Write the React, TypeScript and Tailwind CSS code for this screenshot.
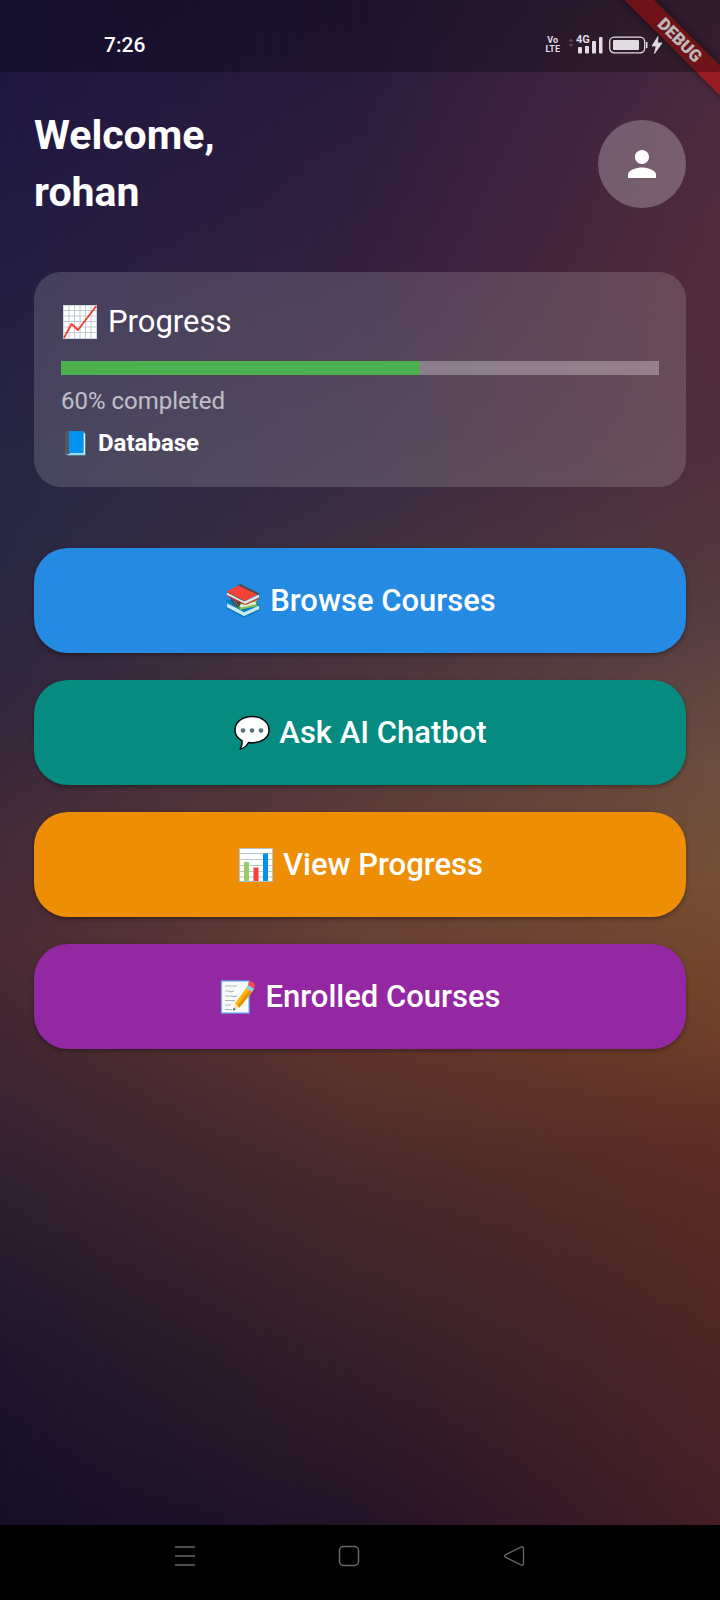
import React from 'react';

type IconProps = { className?: string };

function TrendIcon({ className }: IconProps) {
  return (
    <svg viewBox="0 0 38 38" className={className} aria-hidden="true">
      <rect x="2" y="2" width="34" height="34" fill="#fff" />
      <path
        d="M2.5 7.5h33M2.5 13h33M2.5 18.500h33M2.500 24h33M2.500 29.500h33M8 2.500v33M13.500 2.500v33M19 2.500v33M24.500 2.500v33M30 2.500v33"
        stroke="#b9c4ca"
        strokeWidth="0.9"
        fill="none"
      />
      <rect x="2.400" y="2.400" width="33.200" height="33.200" fill="none" stroke="#c3ccd1" strokeWidth="0.8" />
      <path d="M3 35 L10.500 21 L17 27 L35.300 3" stroke="#f0413a" strokeWidth="1.900" fill="none" strokeLinejoin="round" />
    </svg>
  );
}

function BookIcon({ className }: IconProps) {
  return (
    <svg viewBox="0 0 28 28" className={className} aria-hidden="true">
      <path d="M5 4.500 L8 2 H22 L24.500 4.500 V26.500 H6.500 L4 24.500 Z" fill="#6fa6bd" />
      <path d="M22.500 4.500 H24 V25 H8 V24 H22.500 Z" fill="#e1f0f6" />
      <path d="M4 4 L6.500 2 H9 V24.500 L6 25.500 L4 24 Z" fill="#58595c" />
      <path d="M8 2 H21.500 Q22.500 2 22.500 3 V24.300 H8 Z" fill="#0294ee" />
      <path d="M7 25.500 H24" stroke="#9bd5ec" strokeWidth="1" />
    </svg>
  );
}

function BooksIcon({ className }: IconProps) {
  return (
    <svg viewBox="0 0 38 38" className={className} aria-hidden="true">
      <path d="M2 18.500 L12 18 L35.500 22.500 L20 30.500 Z" fill="#0277bd" />
      <path d="M3 21.500 L20 29.500 L35 23 V27.500 L20 34.500 L3 25.500 Z" fill="#cde6ec" />
      <path d="M2 19 L20 29.500 L35.500 22.500" stroke="#0288d1" strokeWidth="1.500" fill="none" />
      <path d="M2.500 26 L20 35 L35.500 28" stroke="#0b7fc4" strokeWidth="1.700" fill="none" />
      <path d="M8 14 L20 19 L33 17.500 V24 L16 27.500 L10 23 Z" fill="#5f9c35" />
      <path d="M15 22.500 L32 19.500 V22.500 L17 26 Z" fill="#d7e8cf" />
      <path d="M15 22 L33 18 M16 27 L33 23.500" stroke="#8bc34a" strokeWidth="1.300" />
      <path d="M3 9.500 L20 17.500 L14 25.500 L10 23 Z" fill="#424242" />
      <path d="M6 12 L12 23 M9.500 13.500 L14 24" stroke="#78736f" strokeWidth="0.900" />
      <path d="M13 3.500 L16.500 2 L36 12 L33.500 13.500 Z" fill="#4b4647" />
      <path d="M20.500 19.500 L35 12.500 V15.500 L21 22 L3 13.500 V10.500 Z" fill="#dbe7e8" />
      <path d="M21.500 22.500 L35.500 16" stroke="#c93631" strokeWidth="1.200" />
      <path d="M3 13.500 L21 22.500" stroke="#c93631" strokeWidth="1.200" />
      <path d="M2.500 9.500 L14.500 3.500 L33.500 12.500 L21 19 Z" fill="#f44336" />
    </svg>
  );
}

function ChatIcon({ className }: IconProps) {
  return (
    <svg viewBox="0 0 38 38" className={className} aria-hidden="true">
      <path
        d="M19 2.500 C28.500 2.500 36 8 36 16 C36 24 28.500 28.800 19 28.800 C17.800 28.800 16.600 28.700 15.500 28.500 C13.500 32 10.500 34.500 7.500 35 C7 35 7 34.500 7.300 34.200 C8.800 32.600 9.300 29.800 8.900 26.600 C4.700 24.400 2 20.700 2 16 C2 8 9.500 2.500 19 2.500 Z"
        fill="#fff"
        stroke="#050505"
        strokeWidth="1.500"
      />
      <circle cx="10" cy="16.500" r="2.300" fill="#546e7a" />
      <circle cx="19" cy="16.500" r="2.300" fill="#546e7a" />
      <circle cx="28" cy="16.500" r="2.300" fill="#546e7a" />
    </svg>
  );
}

function BarsIcon({ className }: IconProps) {
  return (
    <svg viewBox="0 0 38 38" className={className} aria-hidden="true">
      <rect x="2" y="2" width="34" height="34" fill="#fff" />
      <path d="M2 7.500h34M2 13.500h34M2 19.500h34M2 25.500h34M2 31h34" stroke="#bcc7cc" strokeWidth="1.100" />
      <rect x="2.500" y="2.500" width="33" height="33" fill="none" stroke="#b5bfc4" strokeWidth="1" />
      <rect x="7" y="16" width="5" height="19" fill="#9ccc65" />
      <rect x="16.500" y="21.500" width="5" height="13.500" fill="#f44336" />
      <rect x="26" y="7.500" width="5" height="27.500" fill="#0391ee" />
    </svg>
  );
}

function MemoIcon({ className }: IconProps) {
  return (
    <svg viewBox="0 0 38 38" className={className} aria-hidden="true">
      <rect x="2.500" y="3" width="27.500" height="32" fill="#fafafa" stroke="#64b5f6" strokeWidth="1.200" />
      <path
        d="M6 8h12M6 13h4l2 .8 3-.8M6 18h6l3 .6 3-.6M6 22.500h7l3 .4M6 27h6M6 31.500h5l2 .5"
        stroke="#a7b4ba"
        strokeWidth="1.100"
        fill="none"
      />
      <path d="M14 32.500 L16 25.500 L20.500 29.500 Z" fill="#ffe0b2" />
      <path d="M14 32.500 L14.700 29.800 L16.700 31.500 Z" fill="#424242" />
      <path d="M16 25.500 L27.500 9.500 L33.500 13.500 L20.500 29.500 Z" fill="#fdb515" />
      <path d="M18.500 27.500 L30.500 11.500 L33.500 13.500 L20.500 29.500 Z" fill="#e59600" />
      <path d="M27 10 L29.500 6.500 L35.500 10.500 L33 14 Z" fill="#8ed3ee" />
      <path d="M29 6.800 L30 4.500 Q31.500 2.700 34 4.200 Q37 6.200 36 8.500 L34.800 10.800 Z" fill="#ee4b55" />
    </svg>
  );
}

function PersonIcon({ className }: IconProps) {
  return (
    <svg viewBox="0 0 24 24" className={className} fill="currentColor" aria-hidden="true">
      <path d="M12 12c2.210 0 4-1.790 4-4s-1.790-4-4-4-4 1.790-4 4 1.790 4 4 4zm0 2c-2.670 0-8 1.340-8 4v2h16v-2c0-2.660-5.330-4-8-4z" />
    </svg>
  );
}

const actions = [
  { label: 'Browse Courses', Icon: BooksIcon, color: 'bg-[#258be2]' },
  { label: 'Ask AI Chatbot', Icon: ChatIcon, color: 'bg-[#058b80]' },
  { label: 'View Progress', Icon: BarsIcon, color: 'bg-[#ee8e05]' },
  { label: 'Enrolled Courses', Icon: MemoIcon, color: 'bg-[#9427a2]' },
];

function Backdrop() {
  return (
    <div className="absolute inset-0 -z-10" aria-hidden="true">
      <div className="absolute inset-0 bg-[linear-gradient(to_bottom,#1e163f_0%,#1f1742_6%,#231c43_15%,#262443_27%,#272844_35%,#30263d_45%,#442b39_55%,#4a2a35_62%,#412633_69%,#2f2031_78%,#1f152b_89%,#160f27_100%)]" />
      <div className="absolute inset-0 bg-[linear-gradient(to_bottom,#28193a_0%,#2b1c3d_6%,#331f3e_17%,#3a2c42_32%,#49343d_43%,#5b3a39_52%,#684035_61%,#5e332d_69%,#48292b_78%,#34202a_89%,#241328_100%)] mask-[linear-gradient(to_right,transparent,black_50%)]" />
      <div className="absolute inset-0 bg-[linear-gradient(to_bottom,#43293d_0%,#4c2a40_6%,#542c3c_18%,#512e3c_30%,#553c40_40%,#6c4d40_50%,#754f32_58%,#6d3f28_68%,#5c2d25_75%,#512725_86%,#451f26_100%)] mask-[linear-gradient(to_right,transparent_50%,black)]" />
    </div>
  );
}

function StatusBar() {
  return (
    <header className="relative z-10 flex h-18 items-center justify-between bg-black/27 pt-[18px] pr-14 pl-26">
      <time className="text-[21px] leading-6 font-medium">7:26</time>
      <div className="flex items-center text-[#e0dce2]">
        <div className="mr-2 text-center text-[9px] leading-[9px] font-bold">
          <div>Vo</div>
          <div>LTE</div>
        </div>
        <div className="relative h-5 w-9">
          <svg viewBox="0 0 36 20" className="h-5 w-9" fill="currentColor" aria-hidden="true">
            <path d="M0.500 6.500 L3 3.500 L5.500 6.500 Z M0.500 9 L3 12 L5.500 9 Z" opacity="0.250" />
            <rect x="10" y="12" width="4" height="6.500" rx="1" />
            <rect x="17" y="11" width="4" height="7.500" rx="1" />
            <rect x="24" y="6" width="4" height="12.500" rx="1" />
            <rect x="31" y="2" width="3.500" height="16.500" rx="1" />
          </svg>
          <span className="absolute -top-px left-2 text-[11px] leading-3 font-bold">4G</span>
        </div>
        <svg viewBox="0 0 56 20" className="ml-1 h-5 w-14" fill="currentColor" aria-hidden="true">
          <rect x="1.700" y="2.200" width="35" height="15.600" rx="4.500" fill="none" stroke="currentColor" strokeWidth="1.300" />
          <rect x="5" y="5" width="26" height="10" rx="1" />
          <path d="M38 7h1.500v6H38z" />
          <path d="M50 1.500 L44 11 H48.200 L46.500 18.500 L54 8 H49.500 Z" stroke="currentColor" strokeWidth="0.800" />
        </svg>
      </div>
    </header>
  );
}

function DebugRibbon() {
  return (
    <div className="pointer-events-none absolute -top-24 -right-24 flex size-[272px] rotate-45 items-center justify-center">
      <div className="w-full bg-[#a31b20]/90 text-center text-[17px] leading-[21px] font-black shadow-[0_0_8px_rgba(0,0,0,0.5)]">
        DEBUG
      </div>
    </div>
  );
}

function NavBar() {
  return (
    <nav className="flex h-[75px] items-start justify-between bg-black pt-[18px] pr-[27%] pl-[24%] text-[#68686a]">
      <button type="button" aria-label="Recent apps">
        <svg viewBox="0 0 24 26" className="h-[26px] w-6" stroke="currentColor" strokeWidth="1.500" aria-hidden="true">
          <path d="M2 4h20M2 13h20M2 22h20" />
        </svg>
      </button>
      <button type="button" aria-label="Home">
        <svg viewBox="0 0 24 26" className="h-[26px] w-6" fill="none" stroke="currentColor" strokeWidth="1.500" aria-hidden="true">
          <rect x="2.500" y="3.500" width="19" height="19" rx="4" />
        </svg>
      </button>
      <button type="button" aria-label="Back">
        <svg viewBox="0 0 24 26" className="h-[26px] w-6" fill="none" stroke="currentColor" strokeWidth="1.300" aria-hidden="true">
          <path d="M19.500 3.800 L3.500 11.800 Q1.800 13 3.500 14.200 L19.500 22.200 Q21.500 22.700 21.500 20.500 V5.500 Q21.500 3.300 19.500 3.800 Z" />
        </svg>
      </button>
    </nav>
  );
}

export default function App() {
  return (
    <div className="flex min-h-screen flex-col bg-black font-['Roboto',sans-serif] text-white">
      <div className="relative isolate flex flex-1 flex-col overflow-hidden">
        <Backdrop />
        <DebugRibbon />
        <StatusBar />
        <main className="flex flex-col px-[34px] pt-[35px]">
          <div className="flex items-center justify-between">
            <h1 className="text-[41px] leading-[57px] font-bold">
              Welcome,
              <br />
              rohan
            </h1>
            <button
              type="button"
              aria-label="Profile"
              className="flex size-[88px] items-center justify-center rounded-full bg-white/25"
            >
              <PersonIcon className="size-[42px]" />
            </button>
          </div>

          <section className="mt-[51px] rounded-[27px] bg-white/15 p-[27px]">
            <h2 className="flex items-center gap-[9px] text-[31px] leading-[45px]">
              <TrendIcon className="size-[38px]" />
              Progress
            </h2>
            <div
              role="progressbar"
              aria-label="Course progress"
              aria-valuenow={60}
              aria-valuemin={0}
              aria-valuemax={100}
              className="mt-[17px] h-[14px] bg-white/30"
            >
              <div className="h-full w-3/5 bg-[#4caf50]" />
            </div>
            <p className="mt-[9px] text-[24px] leading-[34px] text-white/65">60% completed</p>
            <p className="mt-2 flex items-center gap-[9px] text-[24px] leading-[34px] font-bold">
              <BookIcon className="size-7" />
              Database
            </p>
          </section>

          <div className="mt-[61px] flex flex-col gap-[27px]">
            {actions.map(({ label, Icon, color }) => (
              <button
                key={label}
                type="button"
                className={`flex h-[105px] items-center justify-center gap-2 rounded-[34px] text-[31px] leading-[44px] font-medium shadow-[0_2px_4px_rgba(0,0,0,0.35)] ${color}`}
              >
                <Icon className="size-[38px]" />
                {label}
              </button>
            ))}
          </div>
        </main>
      </div>
      <NavBar />
    </div>
  );
}
